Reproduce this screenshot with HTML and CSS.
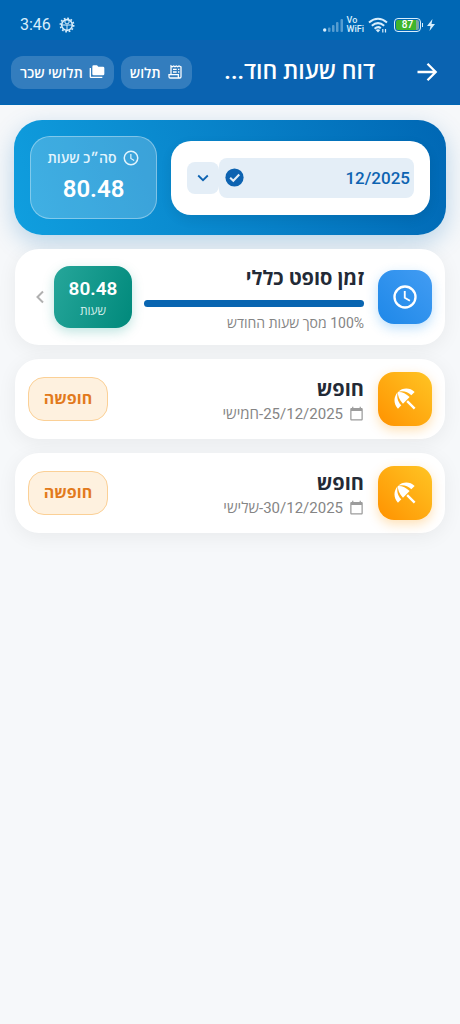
FILE: index.html
```
<!DOCTYPE html>
<html lang="he" dir="rtl">
<head>
<meta charset="utf-8">
<meta name="viewport" content="width=device-width, initial-scale=1">
<title>דוח שעות</title>
<link rel="stylesheet" href="styles.css">
</head>
<body>
<svg class="defs" aria-hidden="true">
  <symbol id="clock" viewBox="0 0 24 24"><circle cx="12" cy="12" r="9" fill="none" stroke="currentColor" stroke-width="2"/><path d="M11.8 6.8V12.6L16.2 15.2" fill="none" stroke="currentColor" stroke-width="1.6"/></symbol>
  <symbol id="umbrella" viewBox="0 0 24 24"><path fill="currentColor" d="M13.127 14.56l1.43-1.43 6.44 6.443L19.57 21zm4.293-5.73l2.86-2.86c-3.95-3.95-10.35-3.96-14.3-.02 3.93-1.3 8.31-.25 11.44 2.88zM5.95 5.98c-3.94 3.95-3.93 10.35.02 14.3l2.86-2.86C5.7 14.29 4.65 9.91 5.95 5.98zm.02-.02l-.01.01c-.38 3.01 1.17 6.88 4.3 10.02l5.73-5.73c-3.13-3.13-7.01-4.68-10.02-4.3z"/></symbol>
  <symbol id="calendar" viewBox="0 0 24 24"><path fill="currentColor" d="M20 3h-1V1h-2v2H7V1H5v2H4c-1.1 0-2 .9-2 2v16c0 1.1.9 2 2 2h16c1.1 0 2-.9 2-2V5c0-1.1-.9-2-2-2zm0 18H4V8h16v13z"/></symbol>
</svg>

<header class="top">
  <div class="status" dir="ltr">
    <span class="time">3:46</span>
    <svg class="gear" viewBox="0 0 24 24" fill="none" stroke="currentColor"><circle cx="12" cy="12" r="8" stroke-width="2.4"/><circle cx="12" cy="12" r="10" stroke-width="2.4" stroke-dasharray="2.6 2.64"/><path d="M4 12h16M12 12v8M9 4v5q3 3 6 0V4" stroke-width="1.5"/></svg>
    <svg class="signal" viewBox="0 0 21 14" fill="currentColor"><circle cx="1.7" cy="12" r="1.7"/><g opacity=".4"><rect x="5" y="9.5" width="2.5" height="4.5" rx="1"/><rect x="9" y="7" width="2.5" height="7" rx="1"/><rect x="13" y="4" width="2.5" height="10" rx="1"/><rect x="17.5" y="1" width="2.5" height="13" rx="1"/></g></svg>
    <span class="vowifi"><span>Vo</span><span>WiFi</span></span>
    <svg class="wifi" viewBox="0 0 20 16" fill="none" stroke="currentColor" stroke-width="2"><path d="M1 5.500Q10-2 19 5.500M3.800 8.800Q10 3.400 16.200 8.800M6.600 11.800Q10 8.800 12.800 11.200"/><path d="M10 15.500l-2.300-2.400q2.300-1.800 4.600 0z" fill="currentColor" stroke="none"/><path d="M14.800 12v3.500M17.500 12v3.500" stroke-width="1.2"/></svg>
    <span class="battery"><span>87</span></span>
    <svg class="bolt" viewBox="0 0 8 12" fill="currentColor"><path d="M5.500 0L0 7h3.500L2.500 12 8 5H4.500z"/></svg>
  </div>
  <div class="appbar">
    <button class="back" type="button" aria-label="חזרה"><svg viewBox="0 0 24 24"><path d="M2.500 12H20M12.500 3.800L20.700 12l-8.200 8.200" fill="none" stroke="currentColor" stroke-width="2.300"/></svg></button>
    <h1 class="title">דוח שעות חוד...</h1>
    <button class="chip" type="button"><svg viewBox="0 0 24 24" fill="none" stroke="currentColor" stroke-width="1.9"><path d="M6 16V3l2 1.300L10 3l2 1.300L14 3l2 1.300L18 3l3 1.500V19a2 2 0 0 1-4 0v-3H3v3a2 2 0 0 0 2 2h14M9 8h5.500M9 12h5.500M16.500 8h2M16.500 12h2"/></svg>תלוש</button>
    <button class="chip" type="button"><svg viewBox="0 0 24 24"><path fill="currentColor" d="M3 6H1v13a2 2 0 0 0 2 2h17v-2H3zM21 4h-7l-2-2H7a2 2 0 0 0-2 2v11a2 2 0 0 0 2 2h14a2 2 0 0 0 2-2V6a2 2 0 0 0-2-2z"/></svg>תלושי שכר</button>
  </div>
</header>

<main class="content">
  <section class="hero">
    <div class="picker">
      <label class="field">
        <input class="month" type="text" value="12/2025" aria-label="חודש" readonly>
        <svg class="check" viewBox="0 0 24 24"><circle cx="12" cy="12" r="11.500" fill="currentColor"/><path d="M6.500 12.200l4 4 7.500-8" fill="none" stroke="#e4eef7" stroke-width="2.600"/></svg>
      </label>
      <button class="open" type="button" aria-label="בחירת חודש"><svg viewBox="0 0 12 12"><path d="M1.200 3.500L6 8.200l4.800-4.700" fill="none" stroke="currentColor" stroke-width="1.800"/></svg></button>
    </div>
    <div class="total">
      <div class="total-label"><svg><use href="#clock"/></svg>סה״כ שעות</div>
      <div class="total-value">80.48</div>
    </div>
  </section>

  <article class="card card-main">
    <div class="tile blue"><svg><use href="#clock"/></svg></div>
    <div class="body">
      <h2 class="name">זמן סופט כללי</h2>
      <div class="bar"><div class="fill" style="width:100%"></div></div>
      <p class="share">100% מסך שעות החודש</p>
    </div>
    <div class="hours"><span class="hours-value">80.48</span><span class="hours-unit">שעות</span></div>
    <button class="more" type="button" aria-label="פרטים"><svg viewBox="0 0 8 14"><path d="M7 1.500L1.500 7 7 12.500" fill="none" stroke="currentColor" stroke-width="2"/></svg></button>
  </article>

  <article class="card">
    <div class="tile amber"><svg><use href="#umbrella"/></svg></div>
    <div class="body">
      <h2 class="name">חופש</h2>
      <p class="date"><svg><use href="#calendar"/></svg><span>25/12/2025-חמישי</span></p>
    </div>
    <span class="tag">חופשה</span>
  </article>

  <article class="card">
    <div class="tile amber"><svg><use href="#umbrella"/></svg></div>
    <div class="body">
      <h2 class="name">חופש</h2>
      <p class="date"><svg><use href="#calendar"/></svg><span>30/12/2025-שלישי</span></p>
    </div>
    <span class="tag">חופשה</span>
  </article>
</main>
</body>
</html>
```
FILE: styles.css
```
* { box-sizing: border-box; }
body {
  margin: 0;
  min-height: 100vh;
  background: #f6f8fa;
  color: #232a36;
  font-family: Roboto, "Open Sans", "Noto Sans", sans-serif;
}
h1, h2, p { margin: 0; }
button { border: 0; padding: 0; font: inherit; color: inherit; background: none; }
svg { display: block; flex: none; }
.defs { position: absolute; width: 0; height: 0; }

.top { background: #0a63b1; color: #fff; border-bottom: 1px solid #0067b5; }
.status {
  display: flex;
  align-items: center;
  height: 40px;
  padding: 9px 25px 0 20px;
  background: #0067b4;
  color: #d8eefc;
}
.time { font-size: 16px; line-height: 20px; }
.gear { width: 16px; height: 16px; margin-left: 8px; }
.signal { width: 21px; height: 14px; margin-left: auto; }
.vowifi {
  display: flex;
  flex-direction: column;
  margin: 0 4px 0 3px;
  font-size: 9px;
  font-weight: 500;
  line-height: 9px;
}
.wifi { width: 20px; height: 16px; }
.battery {
  position: relative;
  width: 27px;
  height: 14px;
  margin: 0 6px;
  padding: 1px;
  border: 1px solid #d8eefc;
  border-radius: 4px;
}
.battery::after {
  content: "";
  position: absolute;
  top: 4px;
  right: -3px;
  width: 1px;
  height: 4px;
  background: #d8eefc;
}
.battery span {
  display: block;
  border-radius: 2px;
  background: linear-gradient(90deg, #3fb52b 85%, #7aa6a0 85%);
  color: #fff;
  font-size: 10px;
  font-weight: 500;
  line-height: 10px;
  text-align: center;
}
.bolt { width: 8px; height: 12px; }

.appbar { display: flex; align-items: center; height: 64px; padding: 0 21px 0 11px; gap: 7px; }
.back svg { width: 24px; height: 24px; }
.title {
  flex: 1;
  min-width: 0;
  padding-right: 33px;
  overflow: hidden;
  white-space: nowrap;
  font-size: 23px;
  font-weight: 600;
  line-height: 32px;
}
.chip {
  display: flex;
  align-items: center;
  gap: 6px;
  height: 33px;
  padding: 0 9px;
  border-radius: 12px;
  background: rgba(255, 255, 255, 0.17);
  color: #fff;
  font-size: 14px;
  font-weight: 600;
  white-space: nowrap;
}
.chip svg { width: 16px; height: 16px; }

.content { display: flex; flex-direction: column; gap: 14px; padding: 15px 15px 24px; }
.hero {
  display: flex;
  align-items: center;
  gap: 14px;
  margin: 0 -1px;
  padding: 16px;
  border-radius: 28px;
  background: linear-gradient(250deg, #0067b4, #109fdf);
  box-shadow: 0 8px 24px rgba(0, 103, 180, 0.25);
}
.picker {
  display: flex;
  align-items: center;
  flex: 1;
  min-width: 0;
  padding: 17px 16px;
  border-radius: 20px;
  background: #fff;
  box-shadow: 0 4px 12px rgba(0, 0, 0, 0.08);
  color: #0d63b1;
}
.field {
  display: flex;
  align-items: center;
  flex: 1;
  min-width: 0;
  height: 40px;
  padding: 0 4px 0 6px;
  border-radius: 8px;
  background: #e4eef7;
}
.month {
  flex: 1;
  min-width: 0;
  padding: 0;
  border: 0;
  background: none;
  color: inherit;
  font: 500 17px/24px Roboto, "Open Sans", sans-serif;
}
.check { width: 19px; height: 19px; }
.open {
  display: grid;
  place-items: center;
  width: 32px;
  height: 32px;
  border-radius: 8px;
  background: #e4eef7;
}
.open svg { width: 12px; height: 12px; }
.total {
  display: flex;
  flex-direction: column;
  align-items: center;
  gap: 4px;
  width: 127px;
  padding: 11px 8px 12px;
  border: 1px solid rgba(255, 255, 255, 0.35);
  border-radius: 20px;
  background: rgba(255, 255, 255, 0.2);
  color: #fff;
}
.total-label {
  display: flex;
  align-items: center;
  gap: 5px;
  font-size: 14px;
  font-weight: 600;
  line-height: 20px;
  color: #e2f4fd;
}
.total-label svg { width: 18px; height: 18px; }
.total-value { font-size: 24px; font-weight: 600; line-height: 34px; }

.card {
  display: flex;
  align-items: center;
  gap: 14px;
  min-height: 80px;
  padding: 11px 13px;
  border-radius: 24px;
  background: #fff;
  box-shadow: 0 4px 20px rgba(0, 0, 0, 0.06);
}
.card-main { min-height: 96px; gap: 12px; }
.card-main .tile { margin-left: 2px; }
.tile {
  display: grid;
  place-items: center;
  flex: none;
  width: 54px;
  height: 54px;
  border-radius: 16px;
  color: #fff;
}
.tile svg { width: 28px; height: 28px; }
.blue {
  background: linear-gradient(225deg, #429cf3, #1e88e8);
  box-shadow: 0 4px 12px rgba(33, 150, 243, 0.3);
}
.amber {
  background: linear-gradient(225deg, #ffc524, #ff9200);
  box-shadow: 0 4px 12px rgba(255, 152, 0, 0.3);
}
.body { flex: 1; min-width: 0; padding-top: 3px; }
.name { font-size: 20px; font-weight: 700; line-height: 26px; }
.bar { height: 7px; margin: 9px 0 6px; border-radius: 4px; background: #e4eef7; }
.fill { height: 100%; border-radius: inherit; background: #0965b1; }
.share { color: #858585; font-size: 14px; line-height: 20px; }
.date {
  display: flex;
  align-items: center;
  gap: 6px;
  color: #858585;
  font-size: 15px;
  line-height: 24px;
}
.date svg { width: 15px; height: 15px; color: #9c9c9c; }
.hours {
  display: flex;
  flex-direction: column;
  align-items: center;
  flex: none;
  width: 78px;
  padding: 10px 0 8px;
  border-radius: 16px;
  background: linear-gradient(110deg, #26a69a, #00897b);
  box-shadow: 0 4px 12px rgba(0, 150, 136, 0.25);
  color: #fff;
}
.hours-value { font-size: 19px; font-weight: 600; line-height: 26px; }
.hours-unit { font-size: 12px; line-height: 18px; color: #d5efeb; }
.more { width: 24px; margin-right: -10px; color: #b0b0b0; }
.more svg { width: 8px; height: 14px; margin: 0 auto; }
.tag {
  min-width: 80px;
  padding: 9px 14px;
  border: 1px solid #fbd096;
  border-radius: 16px;
  background: #fef1df;
  color: #e27a1c;
  font-size: 16px;
  font-weight: 700;
  line-height: 24px;
  text-align: center;
}
```
